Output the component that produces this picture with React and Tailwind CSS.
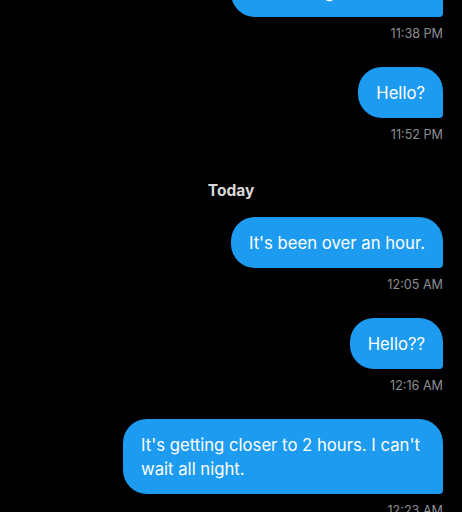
import React from 'react';

const messages = [
  { text: "I'm waiting at the door", time: '11:38 PM' },
  { text: 'Hello?', time: '11:52 PM' },
  { divider: 'Today' },
  { text: "It's been over an hour.", time: '12:05 AM' },
  { text: 'Hello??', time: '12:16 AM' },
  { text: "It's getting closer to 2 hours. I can't wait all night.", time: '12:23 AM' },
];

function Bubble({ text, time }) {
  return (
    <div className="flex flex-col items-end pr-[19px]">
      <div className="max-w-[320px] rounded-[24px] rounded-br-[4px] bg-[#1d9bf0] px-[18px] py-[13.5px] text-[16.7px] leading-6 text-white">
        {text}
      </div>
      <div className="mt-[9px] text-[12.6px] leading-4 text-[#8b8f94]">{time}</div>
    </div>
  );
}

export default function App() {
  return (
    <div className="h-screen overflow-hidden bg-black font-['Inter',sans-serif]">
      <div className="-mt-[34px] flex flex-col gap-[25px]">
        {messages.map((m, i) =>
          m.divider ? (
            <div key={i} className="mt-[13px] mb-[-9px] text-center text-[15.5px] font-bold leading-5 text-[#d9d9d9]">
              {m.divider}
            </div>
          ) : (
            <Bubble key={i} text={m.text} time={m.time} />
          )
        )}
      </div>
    </div>
  );
}
